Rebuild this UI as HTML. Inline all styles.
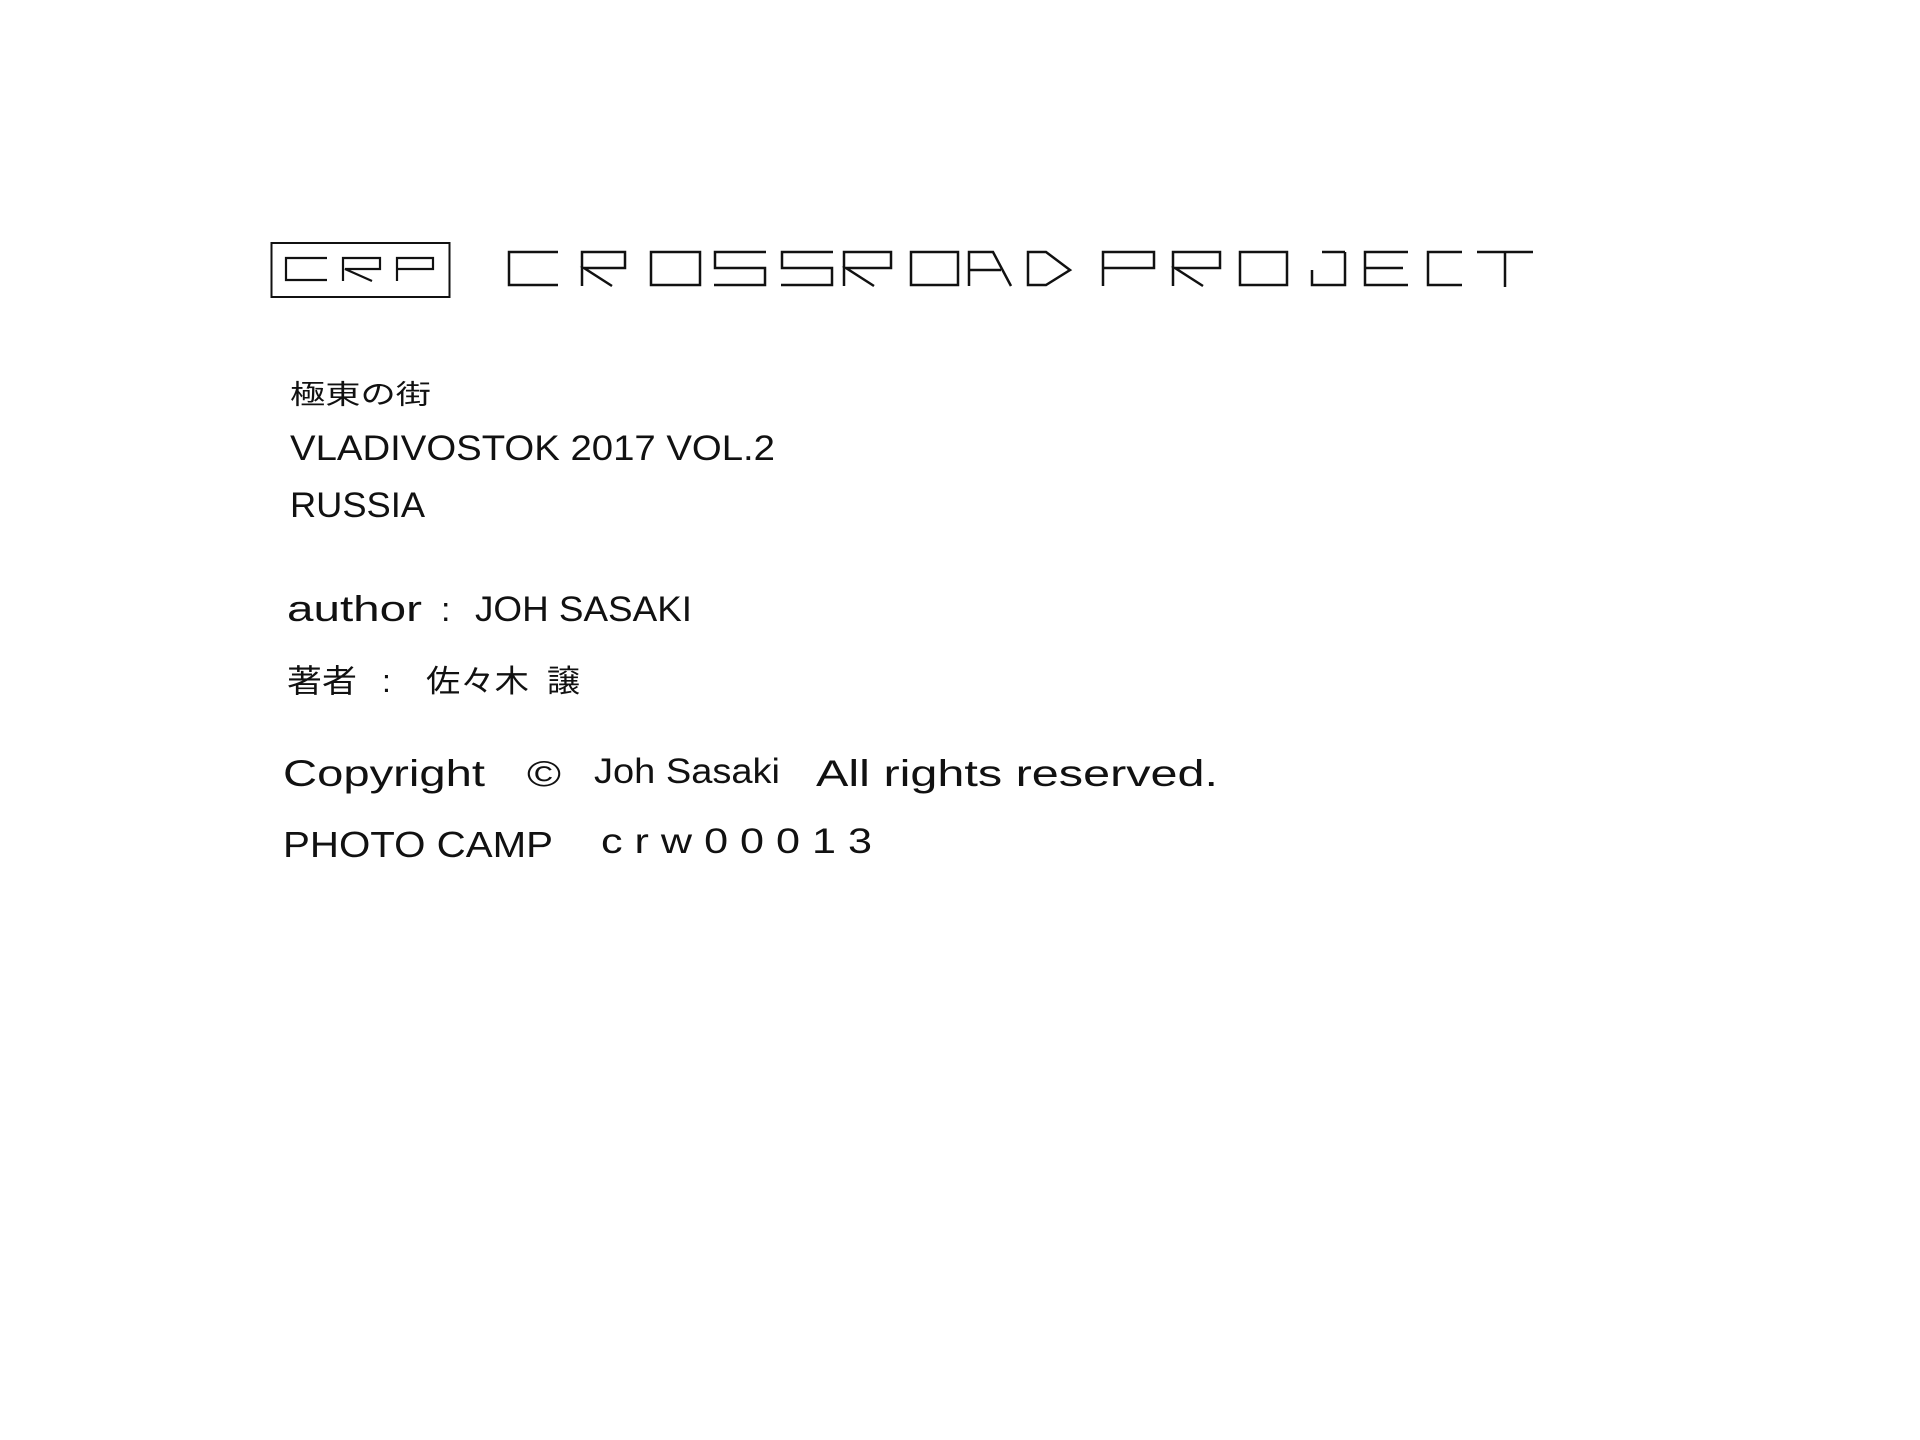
<!DOCTYPE html>
<html><head><meta charset="utf-8"><style>
html,body{margin:0;padding:0;background:#fff;width:1920px;height:1440px;overflow:hidden}
svg{display:block}
text{font-family:"Liberation Sans","Noto Sans CJK JP",sans-serif;fill:#111}
</style></head><body>
<svg width="1920" height="1440" viewBox="0 0 1920 1440" xmlns="http://www.w3.org/2000/svg">
<g fill="none" stroke="#111" stroke-width="2.2" stroke-linecap="butt">
<rect x="271.5" y="243" width="178" height="54" stroke-width="2"/>
<path d="M327 258H286V280H327"/>
<path d="M343 281V258H380V269H345L372 281"/>
<path d="M397 281V258H433V269H398"/>
<g stroke-width="2.5">
<path d="M558 252H509V285H558"/>
<path d="M582 286V252H625V268H584L612 286"/>
<path d="M651 252H700V285H651Z"/>
<path d="M766 252H715V268H765V285H714"/>
<path d="M833 252H782V268H832V285H781"/>
<path d="M844 286V252H891V268H846L874 286"/>
<path d="M911 252H958V285H911Z"/>
<path d="M969 286V252H993L1011 286M969 270H1001"/>
<path d="M1028 252V285H1046L1070 270L1046 252Z"/>
<path d="M1103 286V252H1154V268H1104"/>
<path d="M1173 286V252H1220V268H1175L1203 286"/>
<path d="M1240 252H1287V285H1240Z"/>
<path d="M1345 252V285H1312V270M1322 252H1345"/>
<path d="M1408 252H1365V285H1408M1365 268H1403"/>
<path d="M1462 252H1428V285H1462"/>
<path d="M1477 252H1533M1505 252V287"/>
</g>
</g>
<text x="290" y="404" font-size="27" textLength="141" lengthAdjust="spacingAndGlyphs">極東の街</text>
<text x="290" y="460" font-size="35" textLength="485" lengthAdjust="spacingAndGlyphs">VLADIVOSTOK 2017 VOL.2</text>
<text x="290" y="517" font-size="35" textLength="135" lengthAdjust="spacingAndGlyphs">RUSSIA</text>
<text x="287" y="621" font-size="36" textLength="135" lengthAdjust="spacingAndGlyphs">author</text>
<text x="441" y="621" font-size="34">:</text>
<text x="475" y="621" font-size="35" textLength="217" lengthAdjust="spacingAndGlyphs">JOH SASAKI</text>
<text x="287" y="692" font-size="32" textLength="70" lengthAdjust="spacingAndGlyphs">著者</text>
<text x="382" y="692" font-size="32">:</text>
<text x="426" y="692" font-size="31" textLength="103" lengthAdjust="spacingAndGlyphs">佐々木</text>
<text x="547" y="692" font-size="31" textLength="33" lengthAdjust="spacingAndGlyphs">譲</text>
<text x="283" y="786" font-size="37" textLength="202" lengthAdjust="spacingAndGlyphs">Copyright</text>
<text x="527" y="786" font-size="36" textLength="34" lengthAdjust="spacingAndGlyphs">©</text>
<text x="594" y="783" font-size="35" textLength="186" lengthAdjust="spacingAndGlyphs">Joh Sasaki</text>
<text x="816" y="786" font-size="37" textLength="402" lengthAdjust="spacingAndGlyphs">All rights reserved.</text>
<text x="283" y="857" font-size="36" textLength="270" lengthAdjust="spacingAndGlyphs">PHOTO CAMP</text>
<text x="601" y="853" font-size="35" textLength="271" lengthAdjust="spacingAndGlyphs">c r w 0 0 0 1 3</text>
</svg>
</body></html>
